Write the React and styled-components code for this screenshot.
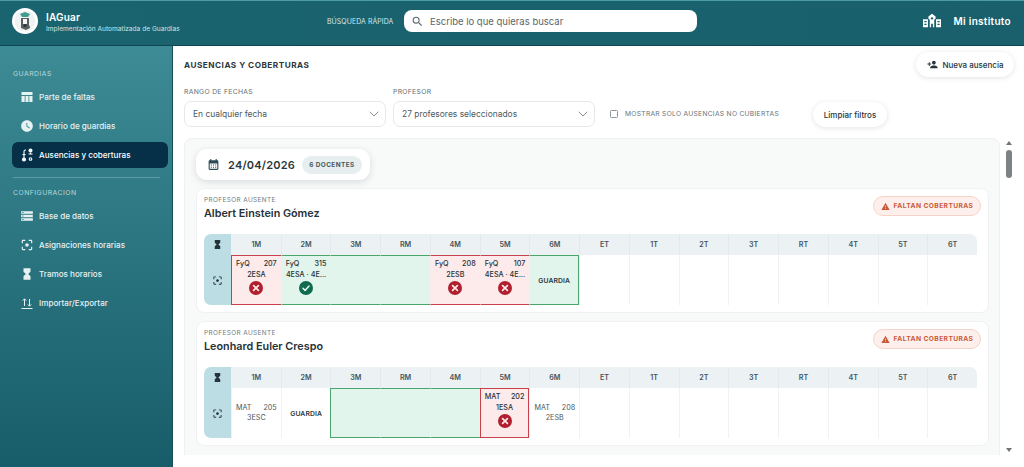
import React from 'react';
import styled, { createGlobalStyle } from 'styled-components';
import { MdWatchLater, MdStorage, MdFilterCenterFocus, MdHourglassFull, MdPersonAdd, MdWarning, MdCalendarMonth, MdOutlineSearch } from 'react-icons/md';
import { ChevronDown } from 'lucide-react';

const Global = createGlobalStyle`
  html, body { margin: 0; padding: 0; height: 100%; overflow: hidden; background: #fff; }
  body { font-family: Inter, "Liberation Sans", sans-serif; color: #1f2d33; }
  #root { height: 100%; }
  * { box-sizing: border-box; }
`;

const Page = styled.div`
  width: 1024px; height: 467px; display: flex; flex-direction: column; overflow: hidden;
`;
const Header = styled.header`
  height: 46px; flex: none; display: flex; align-items: center; padding: 0 13px 4px 12px;
  background: linear-gradient(90deg, #1a646f, #19606c);
  border-top: 1px solid #4c9aa3; border-bottom: 1px solid #0f4650; color: #fff;
`;
const Brand = styled.div` width: 315px; display: flex; align-items: center; gap: 8px; flex: none; `;
const BrandText = styled.div` display: flex; flex-direction: column; gap: 2px; padding-top: 2px; `;
const BrandName = styled.div` font-size: 10px; font-weight: 600; letter-spacing: .2px; line-height: 12px; `;
const BrandSub = styled.div` font-size: 6.600px; line-height: 8px; color: #d3e4e6; white-space: nowrap; `;
const SearchLabel = styled.div` font-size: 6.900px; color: #d7e6e8; white-space: nowrap; width: 77px; flex: none; letter-spacing: .1px; `;
const SearchBox = styled.div`
  width: 293px; height: 22px; background: #fff; border-radius: 8px; display: flex; align-items: center;
  padding-left: 7px; gap: 6px; color: #59666b; font-size: 9.500px; flex: none;
`;
const Institute = styled.div`
  margin-left: auto; display: flex; align-items: center; gap: 12px; font-size: 10px; font-weight: 600; letter-spacing: .3px;
`;
const Body = styled.div` flex: 1; display: flex; min-height: 0; `;
const Sidebar = styled.aside`
  width: 173px; flex: none; padding: 23px 4px 0 12px; color: #e4f0f1;
  background: linear-gradient(180deg, #3d8b95, #175d69);
  border-right: 1px solid #174e59;
`;
const SideTitle = styled.div`
  font-size: 6.800px; letter-spacing: .5px; color: #bcd8db; margin-left: 1px; height: 9px; line-height: 9px;
`;
const SideList = styled.div` display: flex; flex-direction: column; margin-top: 4px; `;
const SideItem = styled.div`
  height: ${p => p.$h || 29}px; display: flex; align-items: center; gap: 5px; padding-left: 8px; border-radius: 6px;
  font-size: 8.100px; font-weight: 500; white-space: nowrap;
  margin-top: ${p => p.$gap || 0}px;
  background: ${p => p.$active ? '#062f48' : 'transparent'};
  color: ${p => p.$active ? '#fff' : '#e6f1f2'};
  & > svg { flex: none; width: 14px; height: 14px; }
`;
const SideDivider = styled.div` height: 1px; background: #5d9ca5; margin: 9px 8px 10px 1px; `;

const Main = styled.main` flex: 1; min-width: 0; padding: 0 10px 0 11px; display: flex; flex-direction: column; `;
const TitleRow = styled.div` height: 31px; padding-top: 6px; display: flex; align-items: center; justify-content: space-between; flex: none; `;
const Title = styled.h1` margin: 0; font-size: 8.200px; font-weight: 700; letter-spacing: .5px; color: #2b373c; `;
const PillButton = styled.button`
  font: inherit; font-size: 8px; font-weight: 500; color: #27343a; border: none; background: #fff; border-radius: 13px;
  height: 25px; padding: 0; display: flex; align-items: center; justify-content: center; gap: 5px; flex: none;
  width: ${p => p.$w}px; box-shadow: 0 1px 5px rgba(30, 60, 70, .14);
`;
const Filters = styled.div` display: flex; align-items: flex-end; height: 43px; margin-top: 7px; flex: none; `;
const Field = styled.div` width: 202px; margin-right: 7px; flex: none; `;
const FieldLabel = styled.div` font-size: 6.800px; color: #636e72; letter-spacing: .3px; margin-bottom: 5px; line-height: 9px; `;
const Select = styled.div`
  height: 26px; border: 1px solid #e5e8e9; border-radius: 7px; display: flex; align-items: center; justify-content: space-between;
  padding: 0 3px 0 8px; font-size: 8.450px; color: #4d5a5f; background: #fff;
`;
const CheckRow = styled.label`
  display: flex; align-items: center; gap: 7px; height: 26px; margin-left: 8px; font-size: 6.700px; color: #687377; letter-spacing: .28px; width: 202px; white-space: nowrap; flex: none;
`;
const CheckBox = styled.span` width: 8px; height: 8px; border: 1px solid #8c9599; border-radius: 1.500px; flex: none; `;
const ClearWrap = styled.div` margin-left: 1px; height: 25px; `;

const ScrollArea = styled.div` flex: 1; min-height: 0; display: flex; margin-top: 11px; margin-bottom: 12px; `;
const Panel = styled.section`
  width: 816px; flex: none; background: #f8f9f9; border: 1px solid #eff1f1; border-bottom: none; border-radius: 8px 8px 0 0;
  padding: 10px 10px 0 11px; display: flex; flex-direction: column; gap: 8px; overflow: hidden;
`;
const DatePill = styled.div`
  align-self: flex-start; height: 31px; width: 174px; background: #fff; border-radius: 11px; display: flex; align-items: center;
  padding-left: 11px; gap: 8px; box-shadow: 0 2px 7px rgba(30, 60, 70, .14); flex: none;
`;
const DateText = styled.div` font-size: 11px; font-weight: 600; letter-spacing: .2px; color: #2b373c; margin-right: -1px; `;
const DateBadge = styled.div`
  height: 18px; width: 60px; border-radius: 9px; background: #e7eef0; color: #46565c; font-size: 6.400px; font-weight: 700;
  letter-spacing: .45px; display: flex; align-items: center; justify-content: center;
`;
const Card = styled.article`
  height: 125px; flex: none; background: #fff; border: 1px solid #f0f1f2; border-radius: 8px; padding: 0 7px; display: flex; flex-direction: column;
`;
const CardHead = styled.div` display: flex; justify-content: space-between; height: 45px; flex: none; `;
const Who = styled.div` padding-top: 7px; `;
const WhoLabel = styled.div` font-size: 6.400px; letter-spacing: .4px; color: #727c80; line-height: 8px; `;
const WhoName = styled.div` font-size: 10.800px; font-weight: 600; color: #273338; margin-top: 3px; line-height: 13px; `;
const Alert = styled.div`
  margin-top: 7px; height: 20px; width: 108px; border-radius: 10px; background: #fdf0ec; border: 1px solid #f6d3c8; color: #c9593a;
  display: flex; align-items: center; justify-content: center; gap: 4px; font-size: 6.700px; font-weight: 700; letter-spacing: .4px; white-space: nowrap;
`;
const Table = styled.div`
  display: grid; grid-template-columns: 27px repeat(15, 1fr); grid-template-rows: 21px 50px;
  border-radius: 7px; overflow: hidden; width: 773px; flex: none;
`;
const Corner = styled.div`
  background: #bcdde3; display: flex; align-items: center; justify-content: center; color: #25343a;
  & svg { width: 11px; height: 11px; }
`;
const HeadCell = styled.div`
  background: #ecf1f4; font-size: 7.200px; font-weight: 600; color: #46555b; display: flex; align-items: center; justify-content: center;
  border-left: 1px solid ${p => p.$first ? 'transparent' : '#e3e9ec'};
`;
const toneBg = { red: '#fdeaea', green: '#e1f5ec', none: '#fff' };
const toneLine = { red: '#c9404a', green: '#4aa56c' };
const Cell = styled.div`
  background: ${p => toneBg[p.$tone || 'none']};
  display: flex; flex-direction: column; align-items: center; padding: 3px 4px 0; min-width: 0;
  color: ${p => p.$strong ? '#273338' : '#4a575c'};
  font-weight: ${p => p.$strong ? 500 : 400};
  border-left: 1px solid ${p => p.$tone ? 'transparent' : '#f0f2f3'};
  ${p => p.$tone && `border-top: 1.5px solid ${toneLine[p.$tone]}; border-bottom: 1.5px solid ${toneLine[p.$tone]};`}
  ${p => p.$left && `border-left: 1.5px solid ${toneLine[p.$tone]};`}
  ${p => p.$right && `border-right: 1.5px solid ${toneLine[p.$tone]};`}
  ${p => p.$center && `justify-content: center; padding-top: 0;`}
`;
const TopLine = styled.div` width: 100%; display: flex; justify-content: space-between; font-size: 7.200px; line-height: 10.500px; `;
const Group = styled.div` font-size: 7.200px; line-height: 10.500px; white-space: nowrap; `;
const Guard = styled.div` font-size: 6.800px; font-weight: 600; color: #2c383d; letter-spacing: .1px; `;
const StatusSlot = styled.div` margin-top: 1px; display: flex; `;

const Scrollbar = styled.div` width: 14px; margin-left: 2px; flex: none; display: flex; flex-direction: column; align-items: center; `;
const ArrowUp = styled.div` margin-top: 3px; width: 0; height: 0; border-left: 3.500px solid transparent; border-right: 3.500px solid transparent; border-bottom: 4px solid #6f7679; `;
const Thumb = styled.div` margin-top: 5px; width: 6px; height: 28px; border-radius: 3px; background: #7d8385; `;
const ArrowDown = styled.div` margin-top: auto; margin-bottom: 3px; width: 0; height: 0; border-left: 3.500px solid transparent; border-right: 3.500px solid transparent; border-top: 4px solid #6f7679; `;

const Logo = () => (
  <svg width="26" height="26" viewBox="0 0 26 26">
    <circle cx="13" cy="13" r="13" fill="#fff" />
    <circle cx="13" cy="13" r="10.500" fill="#eef2f0" />
    <path d="M8 6l5-2 5 2-2 3h-6z" fill="#3f9d8d" />
    <path d="M9 10h8v4l1 6-4 2-5-2z" fill="#57605f" />
    <path d="M11 11h4v5h-4zM7 14l2-1v4l-2 1zM17 14l2 1-1 3-1-1z" fill="#f4f4f2" />
    <circle cx="13" cy="17.500" r="1.600" fill="#2a3537" />
  </svg>
);
const SchoolIcon = () => (
  <svg width="18" height="16" viewBox="0 0 20 16" fill="#fff">
    <path d="M10 0l4 3v2.500l-1.500 1V15h-1.500v-4H9v4H7.500V6.500L6 5.500V3z" />
    <circle cx="10" cy="5" r="1.300" fill="#19606c" />
    <path d="M0 6h5.500v9H0zM14.500 6H20v9h-5.500z" />
    <path d="M1.500 8h2.500v1.500H1.500zM1.500 11h2.500v1.500H1.500zM16 8h2.500v1.500H16zM16 11h2.500v1.500H16z" fill="#19606c" />
  </svg>
);
const TableIcon = () => (
  <svg viewBox="0 0 14 14" fill="#e6f1f2">
    <path d="M1.500 2h11v3h-11zM1.500 6h3.200v6H1.500zM5.500 6h3v6h-3zM9.300 6h3.200v6H9.300z" />
  </svg>
);
const RouteIcon = () => (
  <svg viewBox="0 0 14 14" fill="none" stroke="#fff" strokeWidth="1.100">
    <circle cx="4" cy="11.500" r="1.500" fill="#fff" />
    <circle cx="10.500" cy="2.500" r="1.500" fill="#fff" />
    <circle cx="10.500" cy="11" r="1.300" />
    <path d="M4 10V3.500a1.500 1.500 0 0 1 1.500-1.500H6M2.500 6.500h3M8.500 6h4M10.500 4.500v1.500" />
  </svg>
);
const ImportIcon = () => (
  <svg viewBox="0 0 14 14" fill="none" stroke="#e6f1f2" strokeWidth="1">
    <path d="M1.500 12.500h11M4.500 10V3M2.800 4.600L4.500 2.800l1.700 1.800M9.500 3v7M7.800 8.400l1.700 1.800 1.700-1.800" />
  </svg>
);
const BadIcon = () => (
  <svg width="14" height="14" viewBox="0 0 14 14">
    <circle cx="7" cy="7" r="7" fill="#b0202e" />
    <path d="M4.600 4.600l4.800 4.800M9.400 4.600l-4.800 4.800" stroke="#fbe9ea" strokeWidth="1.700" strokeLinecap="round" />
  </svg>
);
const OkIcon = () => (
  <svg width="14" height="14" viewBox="0 0 14 14">
    <circle cx="7" cy="7" r="7" fill="#0f6a50" />
    <path d="M4 7.300l2.100 2.100L10 5.100" fill="none" stroke="#eafaf3" strokeWidth="1.500" strokeLinecap="round" strokeLinejoin="round" />
  </svg>
);

const SLOTS = ['1M', '2M', '3M', 'RM', '4M', '5M', '6M', 'ET', '1T', '2T', '3T', 'RT', '4T', '5T', '6T'];

const Lesson = ({ a, b, c, status }) => (
  <>
    <TopLine><span>{a}</span><span>{b}</span></TopLine>
    <Group>{c}</Group>
    {status && <StatusSlot>{status === 'ok' ? <OkIcon /> : <BadIcon />}</StatusSlot>}
  </>
);

const Timetable = ({ cells }) => (
  <Table>
    <Corner><MdHourglassFull /></Corner>
    {SLOTS.map((s, i) => <HeadCell key={s} $first={i === 0}>{s}</HeadCell>)}
    <Corner><MdFilterCenterFocus /></Corner>
    {SLOTS.map((s, i) => {
      const c = cells[i] || {};
      return (
        <Cell key={s} $tone={c.tone} $left={c.left} $right={c.right} $strong={c.strong} $center={c.guard || (c.a && !c.status)}>
          {c.guard ? <Guard>GUARDIA</Guard> : c.a ? <Lesson {...c} /> : null}
        </Cell>
      );
    })}
  </Table>
);

const Teacher = ({ name, cells }) => (
  <Card>
    <CardHead>
      <Who>
        <WhoLabel>PROFESOR AUSENTE</WhoLabel>
        <WhoName>{name}</WhoName>
      </Who>
      <Alert><MdWarning size={9} />FALTAN COBERTURAS</Alert>
    </CardHead>
    <Timetable cells={cells} />
  </Card>
);

const einstein = [
  { tone: 'red', left: true, strong: true, a: 'FyQ', b: '207', c: '2ESA', status: 'bad' },
  { tone: 'green', strong: true, a: 'FyQ', b: '315', c: '4ESA · 4E...', status: 'ok' },
  { tone: 'green' },
  { tone: 'green' },
  { tone: 'red', strong: true, a: 'FyQ', b: '208', c: '2ESB', status: 'bad' },
  { tone: 'red', strong: true, a: 'FyQ', b: '107', c: '4ESA · 4E...', status: 'bad' },
  { tone: 'green', right: true, guard: true },
];
const euler = [
  { a: 'MAT', b: '205', c: '3ESC' },
  { guard: true },
  { tone: 'green', left: true },
  { tone: 'green' },
  { tone: 'green' },
  { tone: 'red', left: true, right: true, strong: true, a: 'MAT', b: '202', c: '1ESA', status: 'bad' },
  { a: 'MAT', b: '208', c: '2ESB' },
];

export default function App() {
  return (
    <Page>
      <Global />
      <Header>
        <Brand>
          <Logo />
          <BrandText>
            <BrandName>IAGuar</BrandName>
            <BrandSub>Implementación Automatizada de Guardias</BrandSub>
          </BrandText>
        </Brand>
        <SearchLabel>BÚSQUEDA RÁPIDA</SearchLabel>
        <SearchBox><MdOutlineSearch size={13} />Escribe lo que quieras buscar</SearchBox>
        <Institute><SchoolIcon />Mi instituto</Institute>
      </Header>
      <Body>
        <Sidebar>
          <SideTitle>GUARDIAS</SideTitle>
          <SideList>
            <SideItem $h={29.500}><TableIcon />Parte de faltas</SideItem>
            <SideItem $h={29.500}><MdWatchLater />Horario de guardias</SideItem>
            <SideItem $active $h={26} $gap={1}><RouteIcon />Ausencias y coberturas</SideItem>
          </SideList>
          <SideDivider />
          <SideTitle>CONFIGURACION</SideTitle>
          <SideList>
            <SideItem><MdStorage />Base de datos</SideItem>
            <SideItem><MdFilterCenterFocus />Asignaciones horarias</SideItem>
            <SideItem><MdHourglassFull />Tramos horarios</SideItem>
            <SideItem><ImportIcon />Importar/Exportar</SideItem>
          </SideList>
        </Sidebar>
        <Main>
          <TitleRow>
            <Title>AUSENCIAS Y COBERTURAS</Title>
            <PillButton $w={98}><MdPersonAdd size={11} />Nueva ausencia</PillButton>
          </TitleRow>
          <Filters>
            <Field>
              <FieldLabel>RANGO DE FECHAS</FieldLabel>
              <Select>En cualquier fecha<ChevronDown size={16} strokeWidth={1} /></Select>
            </Field>
            <Field>
              <FieldLabel>PROFESOR</FieldLabel>
              <Select>27 profesores seleccionados<ChevronDown size={16} strokeWidth={1} /></Select>
            </Field>
            <CheckRow><CheckBox />MOSTRAR SOLO AUSENCIAS NO CUBIERTAS</CheckRow>
            <ClearWrap><PillButton $w={74}>Limpiar filtros</PillButton></ClearWrap>
          </Filters>
          <ScrollArea>
            <Panel>
              <DatePill>
                <MdCalendarMonth size={13} color="#2b4a55" />
                <DateText>24/04/2026</DateText>
                <DateBadge>6 DOCENTES</DateBadge>
              </DatePill>
              <Teacher name="Albert Einstein Gómez" cells={einstein} />
              <Teacher name="Leonhard Euler Crespo" cells={euler} />
            </Panel>
            <Scrollbar>
              <ArrowUp />
              <Thumb />
              <ArrowDown />
            </Scrollbar>
          </ScrollArea>
        </Main>
      </Body>
    </Page>
  );
}
